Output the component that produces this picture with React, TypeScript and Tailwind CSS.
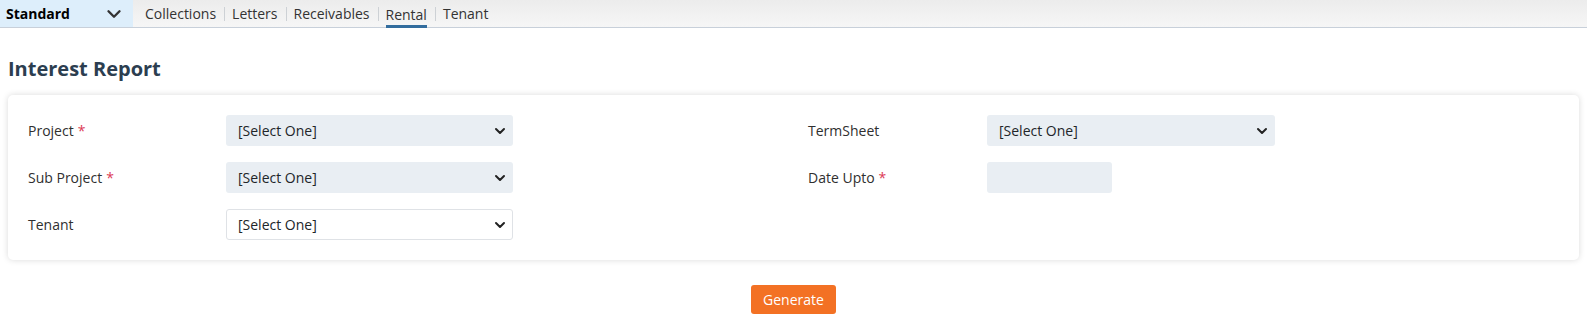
import { ChevronDown } from 'lucide-react'

const navItems = ['Collections', 'Letters', 'Receivables', 'Rental', 'Tenant']

function SelectBox({ bordered = false, width }: { bordered?: boolean; width: string }) {
  return (
    <div
      className={
        bordered
          ? `flex h-[31px] ${width} items-center justify-between rounded-[3px] border border-[#dfe2e6] bg-white pl-[11px] pr-[4px]`
          : `flex h-[31px] ${width} items-center justify-between rounded-[3px] bg-[#e9eef3] pl-[12px] pr-[5px]`
      }
    >
      <span className="text-[14px] text-[#212529]">[Select One]</span>
      <ChevronDown className="h-[16px] w-[16px] text-[#222]" strokeWidth={3} />
    </div>
  )
}

function Label({ text, required = false, width }: { text: string; required?: boolean; width: string }) {
  return (
    <div className={`${width} text-[14px] text-[#2f2f2f]`}>
      {text}
      {required && <span className="ml-[4px] text-[#dc3a55]">*</span>}
    </div>
  )
}

export default function App() {
  return (
    <div className="min-h-[323px] bg-white font-['Open_Sans',sans-serif]">
      {/* top nav */}
      <div className="flex h-[28px] border-b border-[#c8d0da] bg-gradient-to-b from-[#ececec] to-[#f6f6f6]">
        <div className="flex w-[133px] items-center justify-between bg-[#ddeefb] pl-[6px] pr-[8px]">
          <span className="text-[14px] font-bold text-black">Standard</span>
          <ChevronDown className="h-[22px] w-[22px] text-[#333]" strokeWidth={2.6} />
        </div>
        <div className="ml-[12px] flex items-stretch">
          {navItems.map((item, i) => (
            <div key={item} className="flex items-stretch">
              {i > 0 && (
                <span className="ml-[8px] mr-[7px] flex items-center">
                  <span className="h-[14px] w-[1px] bg-[#cdd1d5]" />
                </span>
              )}
              <span
                className={
                  item === 'Rental'
                    ? '-mb-[1px] flex items-center border-b-[3px] border-[#336d9e] pt-[3px] text-[14px] text-[#333]'
                    : 'flex items-center text-[14px] text-[#333]'
                }
              >
                {item}
              </span>
            </div>
          ))}
        </div>
      </div>

      <h1 className="mt-[27px] px-[8px] text-[20px] leading-[28px] font-bold text-[#2c3e50]">Interest Report</h1>

      <div className="mx-[8px] mt-[12px] rounded-[5px] bg-white px-[20px] pb-[20px] pt-[20px] shadow-[0_0_6px_rgba(0,0,0,0.15)]">
        <div className="grid grid-cols-[780px_1fr]">
          <div className="flex flex-col gap-[16px]">
            <div className="flex items-center">
              <Label text="Project" required width="w-[198px]" />
              <SelectBox width="w-[287px]" />
            </div>
            <div className="flex items-center">
              <Label text="Sub Project" required width="w-[198px]" />
              <SelectBox width="w-[287px]" />
            </div>
            <div className="flex items-center">
              <Label text="Tenant" width="w-[198px]" />
              <SelectBox bordered width="w-[287px]" />
            </div>
          </div>
          <div className="flex flex-col gap-[16px]">
            <div className="flex items-center">
              <Label text="TermSheet" width="w-[179px]" />
              <SelectBox width="w-[288px]" />
            </div>
            <div className="flex items-center">
              <Label text="Date Upto" required width="w-[179px]" />
              <div className="h-[31px] w-[125px] rounded-[3px] bg-[#e9eef3]" />
            </div>
          </div>
        </div>
      </div>

      <div className="mt-[25px] flex justify-center pb-[10px]">
        <button className="h-[29px] w-[85px] rounded-[3px] bg-[#f37124] text-[14px] text-white">Generate</button>
      </div>
    </div>
  )
}
